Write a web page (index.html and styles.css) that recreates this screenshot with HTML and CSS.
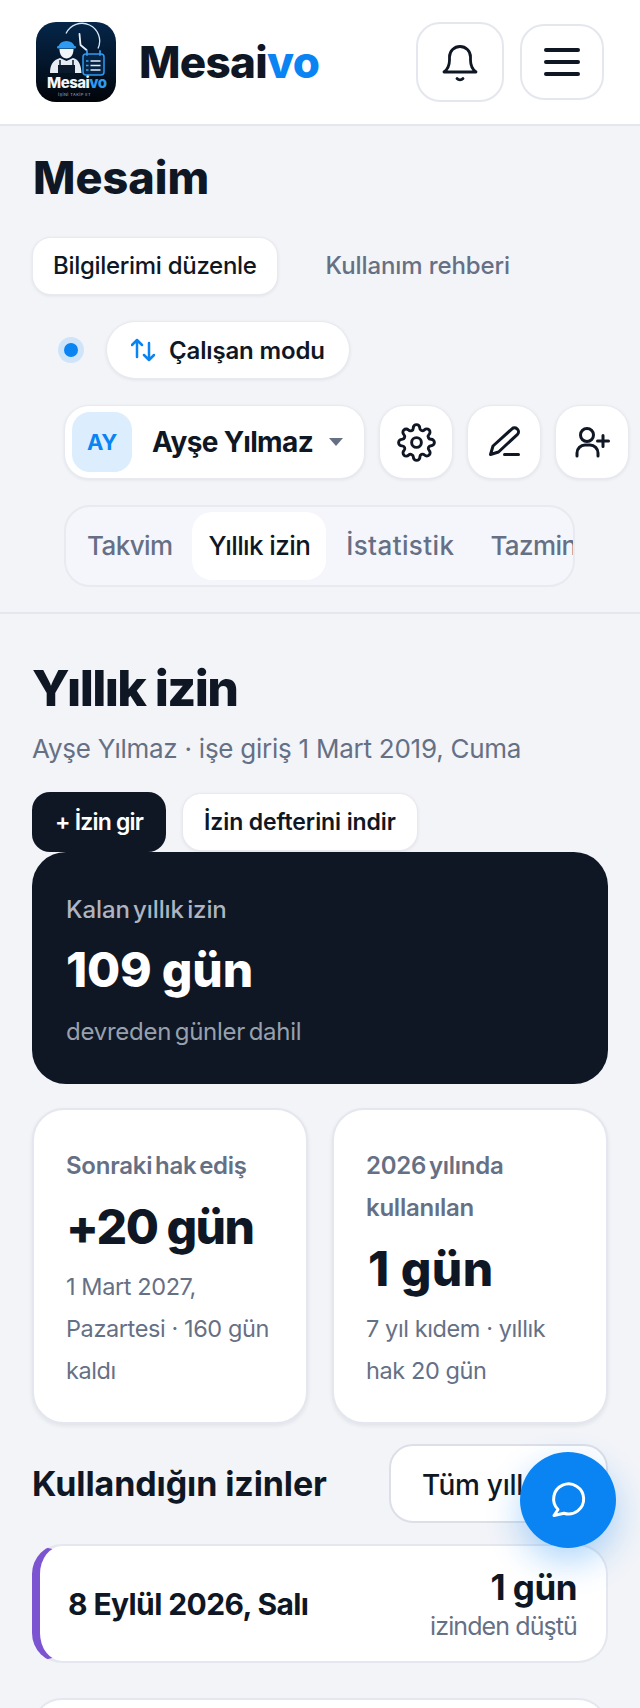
FILE: index.html
```html
<!DOCTYPE html>
<html lang="tr">
<head>
<meta charset="utf-8">
<title>Mesaivo</title>
<link rel="stylesheet" href="styles.css">
</head>
<body>
<header class="topbar">
  <div class="brand">
    <div class="logo">
      <svg viewBox="0 0 80 80" width="80" height="80" aria-hidden="true">
        <defs>
          <linearGradient id="lg" x1="0.5" y1="0" x2="0.5" y2="1"><stop offset="0" stop-color="#05264a"/><stop offset="0.7" stop-color="#03101f"/><stop offset="1" stop-color="#020408"/></linearGradient>
        </defs>
        <rect width="80" height="80" rx="20" fill="url(#lg)"/>
        <path d="M30 11.500a17.500 17.500 0 0 1 32 15" fill="none" stroke="#d8e6f5" stroke-width="1.300"/>
        <path d="M43.500 12l1 11 6 5" fill="none" stroke="#e8eef5" stroke-width="1.800" stroke-linecap="round" stroke-linejoin="round"/>
        <path d="M22 25a9 9 0 0 1 17 0z" fill="#2f9bf0"/>
        <rect x="21" y="24" width="19" height="2.500" rx="1.200" fill="#2f9bf0"/>
        <path d="M23.500 27h14c0 6-3 9.500-7 9.500s-7-3.500-7-9.500z" fill="#f1f4f8"/>
        <path d="M14 51c0-8 3-13 10-15l6.500 3 6.500-3c6 1.500 8 7 8.500 15z" fill="#e6ebf2"/>
        <rect x="22" y="43" width="17" height="8" fill="#0a1a2c"/>
        <path d="M24 38v6M37 38v6" stroke="#0a1a2c" stroke-width="1.500"/>
        <rect x="47" y="32" width="21" height="21" rx="3" fill="#062445" stroke="#2f9bf0" stroke-width="1.500"/>
        <path d="M51 29v4M64 29v4" stroke="#2f9bf0" stroke-width="1.800" stroke-linecap="round"/>
        <path d="M54.500 39h10M54.500 43.500h10M54.500 48h10" stroke="#e8eef5" stroke-width="1.500"/>
        <path d="M50 39h2.500M50 43.500h2.500M50 48h2.500" stroke="#3aa7f5" stroke-width="1.500"/>
      </svg>
      <span class="logo-word">Mesai<b>vo</b></span>
      <span class="logo-sub">İŞİNİ TAKİP ET</span>
    </div>
    <span class="wordmark">Mesai<span class="accent">vo</span></span>
  </div>
  <div class="top-actions">
    <button class="top-btn bell" type="button" aria-label="Bildirimler">
      <svg viewBox="0 0 40 40" width="40" height="40" fill="none" stroke="#0f1724" stroke-width="2.800" stroke-linecap="round" stroke-linejoin="round"><path d="M4 30h32M4 30c3.500-2.500 5.500-6 5.500-12v-3a10.500 10.500 0 0 1 21 0v3c0 6 2 9.500 5.500 12"/><path d="M17 36.500a4 4 0 0 0 6 0"/></svg>
    </button>
    <button class="top-btn menu" type="button" aria-label="Menü">
      <span></span><span></span><span></span>
    </button>
  </div>
</header>

<section class="panel">
  <h2 class="panel-title">Mesaim</h2>
  <div class="subtabs">
    <span class="subtab active">Bilgilerimi düzenle</span>
    <span class="subtab guide">Kullanım rehberi</span>
  </div>
  <div class="mode-row">
    <span class="mode-dot"></span>
    <span class="mode-pill">
      <svg viewBox="0 0 24 24" width="24" height="24" fill="none" stroke="#0b84f3" stroke-width="2.500" stroke-linecap="round" stroke-linejoin="round"><path d="M6 19V2M1 7l5-5 5 5"/><path d="M18 5v17M13 17l5 5 5-5"/></svg>
      <span>Çalışan modu</span>
    </span>
  </div>
  <div class="person-row">
    <div class="person">
      <span class="avatar">AY</span>
      <span class="person-name">Ayşe Yılmaz</span>
      <span class="caret"></span>
    </div>
    <button class="icon-btn" type="button" aria-label="Ayarlar">
      <svg viewBox="0 0 24 24" width="39" height="39" fill="none" stroke="#0f1724" stroke-width="1.800" stroke-linecap="round" stroke-linejoin="round"><circle cx="12" cy="12" r="3"/><path d="M19.400 15a1.650 1.650 0 0 0 .33 1.820l.06.06a2 2 0 0 1 0 2.830 2 2 0 0 1-2.830 0l-.06-.06a1.650 1.650 0 0 0-1.820-.33 1.650 1.650 0 0 0-1 1.510V21a2 2 0 0 1-2 2 2 2 0 0 1-2-2v-.09A1.650 1.650 0 0 0 9 19.400a1.650 1.650 0 0 0-1.820.33l-.06.06a2 2 0 0 1-2.830 0 2 2 0 0 1 0-2.830l.06-.06a1.650 1.650 0 0 0 .33-1.820 1.650 1.650 0 0 0-1.510-1H3a2 2 0 0 1-2-2 2 2 0 0 1 2-2h.09A1.650 1.650 0 0 0 4.600 9a1.650 1.650 0 0 0-.33-1.820l-.06-.06a2 2 0 0 1 0-2.830 2 2 0 0 1 2.830 0l.06.06a1.650 1.650 0 0 0 1.820.33H9a1.650 1.650 0 0 0 1-1.510V3a2 2 0 0 1 2-2 2 2 0 0 1 2 2v.09a1.650 1.650 0 0 0 1 1.510 1.650 1.650 0 0 0 1.820-.33l.06-.06a2 2 0 0 1 2.830 0 2 2 0 0 1 0 2.830l-.06.06a1.650 1.650 0 0 0-.33 1.820V9a1.650 1.650 0 0 0 1.510 1H21a2 2 0 0 1 2 2 2 2 0 0 1-2 2h-.09a1.650 1.650 0 0 0-1.510 1z"/></svg>
    </button>
    <button class="icon-btn" type="button" aria-label="Düzenle">
      <svg viewBox="0 0 72 72" width="72" height="72" fill="none" stroke="#0f1724" stroke-width="3" stroke-linecap="round" stroke-linejoin="round"><path d="M22.500 48.500l2.500-8.500L44 22.800a3.600 3.600 0 0 1 5 0l.5.500a3.600 3.600 0 0 1 0 5L30.500 46z"/><path d="M36.500 48.500h14"/></svg>
    </button>
    <button class="icon-btn" type="button" aria-label="Kişi ekle">
      <svg viewBox="0 0 72 72" width="72" height="72" fill="none" stroke="#0f1724" stroke-width="3" stroke-linecap="round" stroke-linejoin="round"><circle cx="31" cy="29" r="6.500"/><path d="M21 50v-3a8 8 0 0 1 8-8h5a8 8 0 0 1 8 8v3"/><path d="M47 29.500v11M41.500 35h11"/></svg>
    </button>
  </div>
  <div class="tabs-shell">
    <div class="tabs">
      <span class="tab">Takvim</span>
      <span class="tab active">Yıllık izin</span>
      <span class="tab wide">İstatistik</span>
      <span class="tab">Tazminat</span>
    </div>
  </div>
</section>

<main class="content">
  <h1 class="page-title">Yıllık izin</h1>
  <p class="page-sub">Ayşe Yılmaz · işe giriş 1 Mart 2019, Cuma</p>
  <div class="actions">
    <button class="btn dark" type="button">+ İzin gir</button>
    <button class="btn light" type="button">İzin defterini indir</button>
  </div>

  <div class="hero">
    <div class="hero-label">Kalan yıllık izin</div>
    <div class="hero-value">109 gün</div>
    <div class="hero-note">devreden günler dahil</div>
  </div>

  <div class="stats">
    <div class="stat">
      <div class="stat-label">Sonraki hak ediş</div>
      <div class="stat-value tight">+20 gün</div>
      <div class="stat-note">1 Mart 2027, Pazartesi · 160 gün kaldı</div>
    </div>
    <div class="stat">
      <div class="stat-label">2026 yılında kullanılan</div>
      <div class="stat-value roomy">1 gün</div>
      <div class="stat-note">7 yıl kıdem · yıllık hak 20 gün</div>
    </div>
  </div>

  <div class="section-head">
    <h3 class="section-title">Kullandığın izinler</h3>
    <button class="all-btn" type="button">Tüm yıllar</button>
  </div>

  <div class="leave">
    <div class="leave-date">8 Eylül 2026, Salı</div>
    <div class="leave-side">
      <div class="leave-days">1 gün</div>
      <div class="leave-note">izinden düştü</div>
    </div>
  </div>
  <div class="leave leave-next"></div>
</main>

<button class="fab" type="button" aria-label="Destek">
  <svg viewBox="28 28 40 40" width="40" height="40" fill="none" stroke="#fff" stroke-width="3" stroke-linecap="round" stroke-linejoin="round"><path d="M38 57.500A15 15 0 1 1 44 61.200L34 63.500z"/></svg>
</button>
</body>
</html>
```

FILE: styles.css
```css
* { box-sizing: border-box; }
html, body { margin: 0; padding: 0; }
body {
  width: 640px;
  height: 1708px;
  overflow: hidden;
  position: relative;
  background: #f2f4f8;
  color: #0f1724;
  font-family: Inter, "Noto Sans", sans-serif;
}
button { font-family: inherit; cursor: pointer; }

.topbar {
  height: 126px;
  background: #fff;
  border-bottom: 2px solid #e5e7ee;
  display: flex;
  justify-content: space-between;
  align-items: flex-start;
  padding: 22px 36px 0 36px;
}
.brand { display: flex; align-items: center; gap: 23px; }
.logo { width: 80px; height: 80px; position: relative; flex: none; }
.logo svg { display: block; }
.logo-word {
  position: absolute; left: 11px; top: 53px; font-size: 15px; font-weight: 800;
  color: #f1f4f8; letter-spacing: -0.500px; line-height: 16px;
}
.logo-word b { color: #2f9bf0; font-weight: 800; }
.logo-sub {
  position: absolute; left: 22px; top: 70px; font-size: 4px; color: #aab4c0; letter-spacing: .4px; line-height: 5px; white-space: nowrap;
}
.wordmark { font-size: 44px; font-weight: 800; letter-spacing: -0.700px; line-height: 1; color: #0f1724; }
.accent { color: #0b84f3; }
.top-actions { display: flex; align-items: center; gap: 16px; }
.top-btn {
  background: #fff;
  border: 2px solid #e5e7ee;
  border-radius: 24px;
  padding: 0;
  display: flex;
  align-items: center;
  justify-content: center;
}
.bell { width: 88px; height: 80px; }
.menu { width: 84px; height: 76px; flex-direction: column; gap: 8px; }
.menu span { display: block; width: 36px; height: 4px; border-radius: 2px; background: #0f1724; }

.panel {
  padding: 25px 0 0 0;
  height: 488px;
  border-bottom: 2px solid #e5e7ee;
}
.panel-title { margin: 0 0 0 33px; font-size: 45px; font-weight: 800; line-height: 54px; letter-spacing: 0; }
.subtabs { display: flex; align-items: center; margin: 33px 0 0 33px; gap: 29px; }
.subtab { font-size: 24px; font-weight: 500; color: #667085; padding: 0 20px; height: 56px; line-height: 56px; letter-spacing: -0.300px; white-space: nowrap; }
.subtab.guide { padding: 0; letter-spacing: -0.100px; margin-left: 20px; }
.subtab.active { color: #0f1724; background: #fff; border-radius: 18px; box-shadow: 0 0 0 1px #e8eaf0, 0 1px 4px rgba(15,23,36,.12); }

.mode-row { display: flex; align-items: center; gap: 29px; margin: 28px 0 0 58px; }
.mode-dot {
  width: 14px; height: 14px; border-radius: 50%; background: #0b84f3;
  box-shadow: 0 0 0 6px #cfe4f9; margin-left: 6px;
}
.mode-pill {
  display: flex; align-items: center; gap: 14px;
  height: 56px; padding: 0 24px; background: #fff; border-radius: 28px;
  box-shadow: 0 0 0 1px #e8eaf0, 0 1px 4px rgba(15,23,36,.12);
  font-size: 24px; font-weight: 600; letter-spacing: -0.150px; white-space: nowrap;
}
.person-row { display: flex; gap: 16px; margin: 28px 0 0 65px; }
.person {
  width: 299px; height: 72px; background: #fff; border-radius: 24px;
  box-shadow: 0 0 0 1px #e8eaf0, 0 1px 4px rgba(15,23,36,.12);
  display: flex; align-items: center; padding: 0 7px;
}
.avatar {
  width: 60px; height: 60px; border-radius: 18px; background: #dcedfd; color: #0b84f3;
  display: flex; align-items: center; justify-content: center;
  font-size: 22px; font-weight: 700; letter-spacing: -0.500px;
}
.person-name { margin-left: 20px; font-size: 28px; font-weight: 700; letter-spacing: -0.600px; white-space: nowrap; }
.caret { margin-left: auto; margin-right: 14px; width: 0; height: 0; border-left: 7px solid transparent; border-right: 7px solid transparent; border-top: 8px solid #667085; }
.icon-btn {
  width: 72px; height: 72px; padding: 0; background: #fff; border: 0; border-radius: 24px;
  box-shadow: 0 0 0 1px #e8eaf0, 0 1px 4px rgba(15,23,36,.12);
  display: flex; align-items: center; justify-content: center; flex: none;
}
.tabs-shell {
  width: 511px; height: 82px; margin: 27px 0 0 64px; padding: 5px 0;
  background: #f5f6fb; border: 2px solid #e8eaf0; border-radius: 26px; overflow: hidden;
}
.tabs { display: flex; align-items: center; gap: 4px; padding-left: 5px; height: 68px; white-space: nowrap; }
.tab { font-size: 26px; font-weight: 500; color: #667085; padding: 0 16px; line-height: 68px; height: 68px; letter-spacing: -0.600px; }
.tab.active { color: #0f1724; background: #fff; border-radius: 20px; }
.tab.wide { letter-spacing: .4px; }

.content { padding: 0 32px; }
.page-title { margin: 42px 0 0 0; font-size: 50px; line-height: 64px; font-weight: 800; letter-spacing: -1.600px; }
.page-sub { margin: 11px 0 0 0; font-size: 26px; line-height: 36px; color: #667085; letter-spacing: -0.250px; }
.actions { display: flex; align-items: center; gap: 17px; margin-top: 25px; }
.btn { border-radius: 18px; font-size: 23px; font-weight: 600; border: 0; white-space: nowrap; }
.btn.dark { height: 60px; padding: 0 23px; background: #0f1724; color: #fff; letter-spacing: -0.800px; }
.btn.light { height: 56px; padding: 0 21px; background: #fff; color: #0f1724; box-shadow: 0 0 0 1px #e8eaf0, 0 1px 4px rgba(15,23,36,.12); letter-spacing: -0.100px; }

.hero {
  height: 232px; background: #0f1724; border-radius: 34px; color: #fff;
  padding: 42px 34px 0 34px;
}
.hero-label { font-size: 24px; font-weight: 500; color: #aeb4c0; line-height: 32px; letter-spacing: -0.100px; word-spacing: -3px; }
.hero-value { font-size: 48px; font-weight: 800; line-height: 64px; margin-top: 12px; letter-spacing: -0.200px; }
.hero-note { font-size: 24px; color: #98a0ae; line-height: 32px; margin-top: 14px; letter-spacing: -0.250px; word-spacing: -3px; }

.stats { display: grid; grid-template-columns: 276px 276px; gap: 24px; margin-top: 24px; }
.stat {
  height: 316px; background: #fff; border: 2px solid #e5e7ee; border-radius: 32px;
  padding: 35px 32px 0 32px;
  box-shadow: 0 2px 4px rgba(15,23,36,.08);
}
.stat-label { font-size: 24px; font-weight: 600; line-height: 42px; color: #667085; letter-spacing: -0.250px; word-spacing: -3px; }
.stat-value { font-size: 48px; font-weight: 800; line-height: 60px; letter-spacing: -0.700px; margin-top: 10px; }
.stat-value.tight { letter-spacing: -1.500px; }
.stat-value.roomy { letter-spacing: .5px; margin-left: 2px; }
.stat-note { font-size: 23.500px; line-height: 42px; color: #667085; letter-spacing: -0.400px; margin-top: 9px; }

.section-head { display: flex; justify-content: space-between; align-items: center; margin-top: 20px; }
.section-title { margin: 0; font-size: 34px; font-weight: 700; letter-spacing: -0.100px; }
.all-btn {
  height: 79px; width: 219px; background: #fff; border: 2px solid #dcdfe8; border-radius: 24px;
  font-size: 28px; font-weight: 500; text-align: left; padding: 2px 0 0 31px; color: #0f1724; letter-spacing: -0.300px; white-space: nowrap;
}
.leave {
  height: 119px; margin-top: 21px; background: #fff; border: 2px solid #e5e7ee; border-left: 8px solid #7c54d1;
  border-radius: 30px; display: flex; justify-content: space-between; align-items: center;
  padding: 0 29px 0 28px;
}
.leave-date { font-size: 30px; font-weight: 700; letter-spacing: -0.600px; }
.leave-side { text-align: right; }
.leave-days { font-size: 35px; font-weight: 700; line-height: 44px; letter-spacing: -0.500px; }
.leave-note { font-size: 25px; color: #667085; line-height: 34px; letter-spacing: -0.900px; }
.leave-next { margin-top: 35px; border-left: 2px solid #e5e7ee; }

.fab {
  position: absolute; left: 520px; top: 1452px; width: 96px; height: 96px; border-radius: 50%;
  background: #0b84f3; border: 0; padding: 0; display: flex; align-items: center; justify-content: center;
  box-shadow: 0 14px 34px rgba(11,132,243,.32);
}
```
